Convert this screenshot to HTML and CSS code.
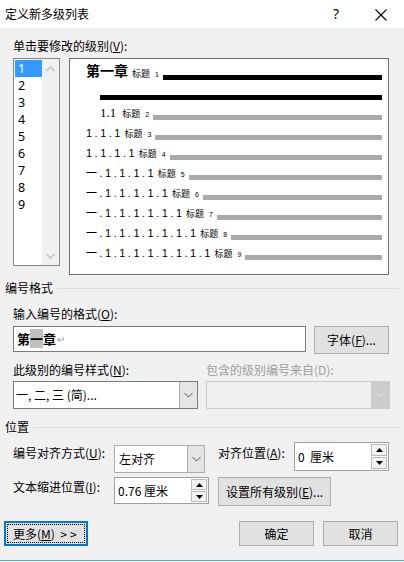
FILE: index.html
```html
<!DOCTYPE html>
<html lang="zh-CN">
<head>
<meta charset="utf-8">
<title>定义新多级列表</title>
<link rel="stylesheet" href="styles.css">
</head>
<body>
<div class="dlg">
  <div class="titlebar">
    <span class="ttl">定义新多级列表</span>
    <span class="help">?</span>
    <svg class="close" width="12" height="12" viewBox="0 0 12 12"><path d="M0.5 0.5 L11.5 11.5 M11.5 0.5 L0.5 11.5" stroke="#000" stroke-width="1.1" fill="none"/></svg>
  </div>

  <div class="lbl l1">单击要修改的级别(<u>V</u>):</div>
  <div class="levels">
    <div class="list">
      <div class="items">
        <div class="it sel">1</div>
        <div class="it">2</div>
        <div class="it">3</div>
        <div class="it">4</div>
        <div class="it">5</div>
        <div class="it">6</div>
        <div class="it">7</div>
        <div class="it">8</div>
        <div class="it">9</div>
      </div>
      <div class="sb">
        <svg width="9" height="6" viewBox="0 0 9 6"><path d="M0.5 5 L4.5 1 L8.5 5" stroke="#c2c2c2" stroke-width="1.4" fill="none"/></svg>
        <svg width="9" height="6" viewBox="0 0 9 6"><path d="M0.5 1 L4.5 5 L8.5 1" stroke="#c2c2c2" stroke-width="1.4" fill="none"/></svg>
      </div>
    </div>
    <div class="preview">
      <div class="row"><span class="n1">第一章</span><span class="tl">标题</span><span class="d">1</span><span class="bar blk"></span></div>
      <div class="row"><span class="bar blk ind"></span></div>
      <div class="row"><span class="n2">1.1</span><span class="tl">标题</span><span class="d">2</span><span class="bar"></span></div>
      <div class="row"><span class="sq">1.1.1</span><span class="tl">标题</span><span class="d">3</span><span class="bar"></span></div>
      <div class="row"><span class="sq">1.1.1.1</span><span class="tl">标题</span><span class="d">4</span><span class="bar"></span></div>
      <div class="row"><span class="sq">一.1.1.1.1</span><span class="tl">标题</span><span class="d">5</span><span class="bar"></span></div>
      <div class="row"><span class="sq">一.1.1.1.1.1</span><span class="tl">标题</span><span class="d">6</span><span class="bar"></span></div>
      <div class="row"><span class="sq">一.1.1.1.1.1.1</span><span class="tl">标题</span><span class="d">7</span><span class="bar"></span></div>
      <div class="row"><span class="sq">一.1.1.1.1.1.1.1</span><span class="tl">标题</span><span class="d">8</span><span class="bar"></span></div>
      <div class="row"><span class="sq">一.1.1.1.1.1.1.1.1</span><span class="tl">标题</span><span class="d">9</span><span class="bar"></span></div>
    </div>
  </div>

  <div class="grp g1"><span>编号格式</span><i class="rule"></i></div>
  <div class="lbl l2">输入编号的格式(<u>O</u>):</div>
  <div class="inrow">
    <div class="input"><b>第<span class="hl">一</span>章</b><span class="ret">↵</span></div>
    <div class="btn fontbtn">字体(<u>F</u>)...</div>
  </div>

  <div class="selgrid">
    <div class="lbl">此级别的编号样式(<u>N</u>):</div>
    <div class="lbl dis">包含的级别编号来自(D):</div>
    <div class="select s1"><span class="val">一, 二, 三 (简)...</span><span class="dd"><svg width="9" height="6" viewBox="0 0 9 6"><path d="M0.5 1 L4.5 5 L8.5 1" stroke="#555" stroke-width="1" fill="none"/></svg></span></div>
    <div class="select s2"><span class="val"></span><span class="dd"><svg width="9" height="6" viewBox="0 0 9 6"><path d="M0.5 1 L4.5 5 L8.5 1" stroke="#e6e6e6" stroke-width="1" fill="none"/></svg></span></div>
  </div>

  <div class="grp g2"><span>位置</span><i class="rule"></i></div>
  <div class="posrow r1">
    <div class="lbl pl">编号对齐方式(<u>U</u>):</div>
    <div class="select s3"><span class="val">左对齐</span><span class="dd"><svg width="9" height="6" viewBox="0 0 9 6"><path d="M0.5 1 L4.5 5 L8.5 1" stroke="#555" stroke-width="1" fill="none"/></svg></span></div>
    <div class="lbl pl2">对齐位置(<u>A</u>):</div>
    <div class="spin sp1"><span class="val">0&nbsp; 厘米</span><span class="arrows"><span class="ab"><svg width="7" height="4" viewBox="0 0 7 4"><path d="M0 4 L3.5 0 L7 4Z" fill="#000"/></svg></span><span class="ab"><svg width="7" height="4" viewBox="0 0 7 4"><path d="M0 0 L3.5 4 L7 0Z" fill="#000"/></svg></span></span></div>
  </div>
  <div class="posrow r2">
    <div class="lbl pl">文本缩进位置(<u>I</u>):</div>
    <div class="spin sp2"><span class="val">0.76 厘米</span><span class="arrows"><span class="ab"><svg width="7" height="4" viewBox="0 0 7 4"><path d="M0 4 L3.5 0 L7 4Z" fill="#000"/></svg></span><span class="ab"><svg width="7" height="4" viewBox="0 0 7 4"><path d="M0 0 L3.5 4 L7 0Z" fill="#000"/></svg></span></span></div>
    <div class="btn allbtn">设置所有级别(<u>E</u>)...</div>
  </div>

  <div class="bottom">
    <div class="btn more"><span class="focus">更多(<u>M</u>)&nbsp; <span class="gt">&gt;&gt;</span></span></div>
    <div class="spacer"></div>
    <div class="btn ok">确定</div>
    <div class="btn cancel">取消</div>
  </div>

  <div class="strip"></div>
</div>
</body>
</html>
```

FILE: styles.css
```css
* { box-sizing: border-box; }
html, body { margin: 0; padding: 0; }
body {
  width: 404px;
  height: 562px;
  overflow: hidden;
  background: #f0f0f0;
  font-family: "Noto Sans CJK SC", "Noto Sans", sans-serif;
  font-size: 12px;
  color: #000;
}
u { text-decoration: underline; text-underline-offset: 1px; }

.dlg {
  height: 562px;
  display: flex;
  flex-direction: column;
}

/* title bar */
.titlebar {
  height: 28px;
  background: #fff;
  display: flex;
  align-items: center;
  padding: 0 17px 0 5px;
  flex: none;
}
.ttl { flex: 1; font-size: 12px; line-height: 16px; }
.help { font-family: "Noto Sans", sans-serif; font-size: 14px; line-height: 16px; margin-right: 36px; }
.close { display: block; margin-top: 1px; }

.lbl { line-height: 16px; white-space: nowrap; }
.dis { color: #a0a0a0; }

.l1 { margin: 10px 0 4px 13px; }

/* level list + preview */
.levels {
  display: flex;
  align-items: flex-start;
  margin-left: 13px;
  gap: 9px;
}
.list {
  width: 47px;
  height: 208px;
  border: 1px solid #828790;
  background: #fff;
  display: flex;
  padding: 1px 0 0 1px;
}
.items { width: 27px; }
.it {
  height: 17px;
  line-height: 17px;
  padding-left: 3px;
  font-family: "Noto Sans", sans-serif;
  font-size: 12.5px;
}
.it.sel { background: #3399ff; color: #fff; }
.sb {
  width: 17px;
  margin-top: -1px;
  background: #f0f0f0;
  display: flex;
  flex-direction: column;
  justify-content: space-between;
  align-items: center;
  padding: 7px 0 6px;
}
.sb svg { display: block; }

.preview {
  width: 320px;
  height: 217px;
  border: 1px solid #6e6e6e;
  background: #fff;
  padding: 1px 6px 0 16px;
}
.row {
  height: 20px;
  display: flex;
  align-items: flex-end;
  white-space: nowrap;
}
.n1 {
  font-family: "Noto Sans CJK SC", sans-serif;
  font-weight: bold;
  font-size: 14px;
  line-height: 14px;
  margin-bottom: 3px;
}
.n2 {
  font-family: "Liberation Serif", serif;
  font-size: 13px;
  line-height: 13px;
  margin: 0 2px 1px 14px;
}
.sq {
  font-family: "Liberation Sans", "Noto Sans CJK SC", sans-serif;
  font-size: 11px;
  line-height: 11px;
  letter-spacing: 2.5px;
  margin: 0 -2.5px 1px 0;
}
.tl {
  font-size: 9px;
  line-height: 9px;
  margin: 0 0 2px 4px;
}
.d {
  font-family: "Liberation Sans", sans-serif;
  font-size: 7px;
  line-height: 7px;
  margin: 0 0 2px 5px;
}
.bar {
  flex: 1;
  height: 5px;
  background: #aaaaaa;
  margin-left: 4px;
}
.bar.blk { background: #000; }
.bar.ind { margin-left: 14px; }

/* group headers */
.grp {
  display: flex;
  align-items: center;
  margin: 5px 5px 0 5px;
  line-height: 16px;
}
.g2 { margin-top: 10px; }
.rule { flex: 1; height: 1px; background: #dcdcdc; margin-left: 4px; }

.l2 { margin: 10px 0 0 13px; }

/* format input row */
.inrow {
  display: flex;
  align-items: flex-start;
  margin: 4px 0 0 13px;
  gap: 8px;
}
.input {
  width: 293px;
  height: 26px;
  border: 1px solid #7a7a7a;
  background: #fff;
  padding: 0 3px;
  display: flex;
  align-items: center;
  font-size: 13px;
  line-height: 16px;
}
.input b { font-weight: bold; }
.hl { background: #c0c0c0; }
.ret { color: #a0a0a0; font-size: 10px; margin-left: 1px; }

.btn {
  background: #e1e1e1;
  border: 1px solid #adadad;
  display: flex;
  align-items: center;
  justify-content: center;
  line-height: 16px;
  white-space: nowrap;
}
.fontbtn { width: 75px; height: 28px; }

/* selects */
.selgrid {
  display: grid;
  grid-template-columns: 185px 184px;
  column-gap: 8px;
  row-gap: 3px;
  margin: 8px 0 0 13px;
}
.select {
  height: 28px;
  border: 1px solid #7a7a7a;
  background: #fff;
  display: flex;
}
.select .val {
  flex: 1;
  line-height: 16px;
  padding: 0 2px;
  display: flex;
  align-items: center;
}
.select .dd {
  width: 18px;
  background: #e5e5e5;
  border-left: 1px solid #adadad;
  display: flex;
  align-items: center;
  justify-content: center;
}
.s2 { background: #f0f0f0; border-color: #cccccc; }
.s2 .dd { background: #cccccc; border-left-color: #cccccc; }
.s3 { width: 91px; margin-top: 3px; border-color: #adadad; }
.s3 .val { padding-left: 4px; }
.s3 .dd { width: 17px; }

/* position rows */
.posrow {
  display: flex;
  align-items: flex-start;
  margin-left: 13px;
}
.r1 { margin-top: 7px; }
.r2 { margin-top: 4px; }
.pl { width: 101px; margin-top: 3px; }
.r2 .pl { margin-top: 2px; }
.pl2 { margin: 3px 0 0 13px; width: 76px; }

.spin {
  border: 1px solid #a0a0a0;
  background: #fff;
  display: flex;
}
.spin .val {
  flex: 1;
  display: flex;
  align-items: center;
  padding-left: 3px;
  line-height: 16px;
  white-space: pre;
}
.sp1 { width: 95px; height: 29px; }
.sp2 { width: 95px; height: 27px; }
.arrows {
  width: 17px;
  display: flex;
  flex-direction: column;
  padding: 1px 1px 1px 0;
  gap: 1px;
}
.ab {
  flex: 1;
  border: 1px solid #b9b9b9;
  background: #f2f2f2;
  display: flex;
  align-items: center;
  justify-content: center;
}
.ab svg { display: block; }
.allbtn { width: 113px; height: 29px; margin-left: 9px; }

/* bottom buttons */
.bottom {
  display: flex;
  align-items: flex-start;
  margin: 15px 6px 0 4px;
  gap: 9px;
}
.spacer { flex: 1; }
.more {
  width: 84px;
  height: 25px;
  border: 2px solid #0078d7;
  padding: 1px;
  justify-content: stretch;
}
.more .focus {
  flex: 1;
  align-self: stretch;
  border: 1px dotted #000;
  display: flex;
  align-items: center;
  padding-left: 5px;
  white-space: pre;
}
.gt { letter-spacing: 3px; }
.ok, .cancel { width: 75px; height: 25px; }

.strip {
  margin-top: auto;
  height: 2px;
  border-top: 1px solid #4ea6e6;
  background: #f8f8f8;
}
```
